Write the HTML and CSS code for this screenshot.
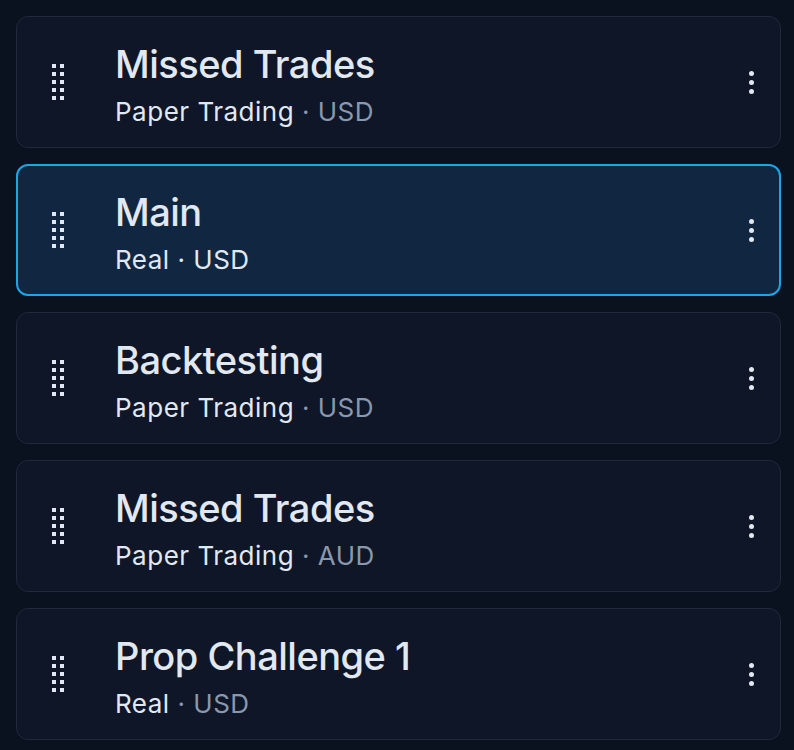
FILE: index.html
```html
<!DOCTYPE html>
<html lang="en">
<head>
    <meta charset="UTF-8">
    <meta name="viewport" content="width=device-width, initial-scale=1.0">
    <title>Accounts</title>
    <link rel="stylesheet" href="styles.css">
</head>
<body>

    <main class="account-list">
        <div class="account-card">
            <div class="drag-handle"><span></span><span></span><span></span><span></span><span></span><span></span><span></span><span></span><span></span><span></span></div>
            <div class="account-info">
                <div class="account-name">Missed Trades</div>
                <div class="account-meta">Paper Trading <span class="muted">· USD</span></div>
            </div>
            <button class="more-button"><span></span><span></span><span></span></button>
        </div>

        <div class="account-card selected">
            <div class="drag-handle"><span></span><span></span><span></span><span></span><span></span><span></span><span></span><span></span><span></span><span></span></div>
            <div class="account-info">
                <div class="account-name">Main</div>
                <div class="account-meta">Real <span class="muted">· USD</span></div>
            </div>
            <button class="more-button"><span></span><span></span><span></span></button>
        </div>

        <div class="account-card">
            <div class="drag-handle"><span></span><span></span><span></span><span></span><span></span><span></span><span></span><span></span><span></span><span></span></div>
            <div class="account-info">
                <div class="account-name">Backtesting</div>
                <div class="account-meta">Paper Trading <span class="muted">· USD</span></div>
            </div>
            <button class="more-button"><span></span><span></span><span></span></button>
        </div>

        <div class="account-card">
            <div class="drag-handle"><span></span><span></span><span></span><span></span><span></span><span></span><span></span><span></span><span></span><span></span></div>
            <div class="account-info">
                <div class="account-name">Missed Trades</div>
                <div class="account-meta">Paper Trading <span class="muted">· AUD</span></div>
            </div>
            <button class="more-button"><span></span><span></span><span></span></button>
        </div>

        <div class="account-card">
            <div class="drag-handle"><span></span><span></span><span></span><span></span><span></span><span></span><span></span><span></span><span></span><span></span></div>
            <div class="account-info">
                <div class="account-name">Prop Challenge 1</div>
                <div class="account-meta">Real <span class="muted">· USD</span></div>
            </div>
            <button class="more-button"><span></span><span></span><span></span></button>
        </div>
    </main>

</body>
</html>
```

FILE: styles.css
```css
* {
    margin: 0;
    padding: 0;
    box-sizing: border-box;
}

body {
    font-family: 'Inter', 'Noto Sans', sans-serif;
    background-color: #0a111f;
    color: #e2e8f0;
}

.account-list {
    display: flex;
    flex-direction: column;
    gap: 16px;
    padding: 16px 13px 16px 16px;
}

.account-card {
    display: flex;
    align-items: center;
    height: 132px;
    padding: 0 26px 0 35px;
    background-color: #0e1628;
    border: 1px solid #1f2a3b;
    border-radius: 12px;
}

.account-card.selected {
    background-color: #112641;
    border: 2px solid #1aa7e6;
    padding: 0 25px 0 34px;
}

.drag-handle {
    display: grid;
    grid-template-columns: 4px 4px;
    gap: 4px;
    width: 12px;
    margin-right: 51px;
}

.drag-handle span {
    width: 4px;
    height: 4px;
    background-color: #e2e8f0;
}

.account-info {
    flex: 1;
    display: flex;
    flex-direction: column;
    gap: 10px;
    padding-top: 5px;
}

.account-name {
    font-size: 38px;
    line-height: 44px;
    font-weight: 500;
    letter-spacing: -0.5px;
    color: #e2e8f0;
}

.account-meta {
    font-size: 26px;
    line-height: 32px;
    letter-spacing: 0.5px;
    color: #e2e8f0;
}

.account-meta .muted {
    color: #8a98ad;
}

.selected .account-meta .muted {
    color: #e2e8f0;
}

.more-button {
    display: flex;
    flex-direction: column;
    gap: 4px;
    background: none;
    border: none;
    cursor: pointer;
}

.more-button span {
    width: 5px;
    height: 5px;
    border-radius: 50%;
    background-color: #e2e8f0;
}
```
